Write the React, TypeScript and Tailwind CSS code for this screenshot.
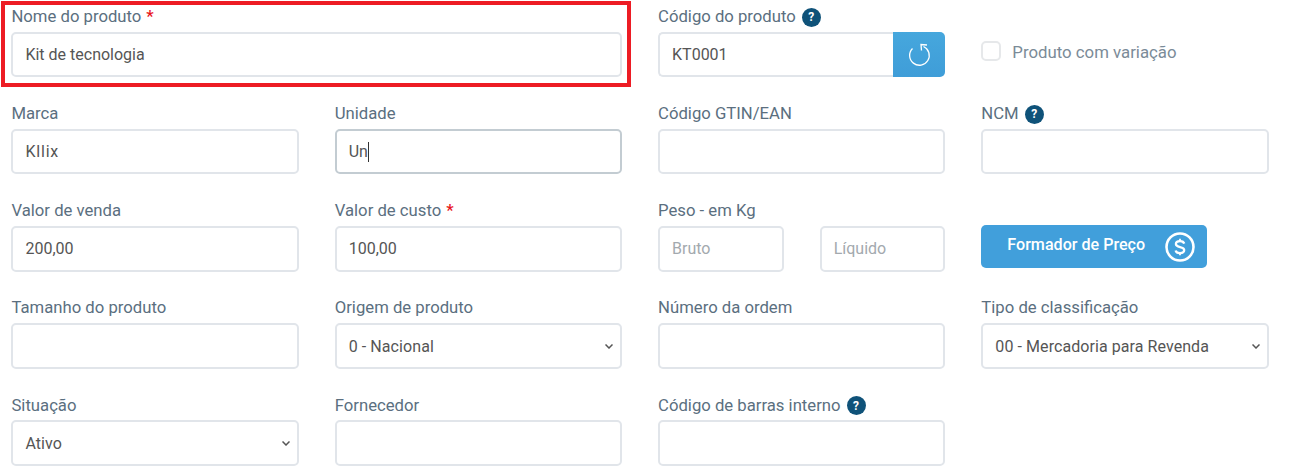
import { useId } from 'react';

const inputClass =
  'block h-[45.4px] w-full rounded-[5px] border-2 bg-white px-[12px] text-[16px] text-[#555] outline-none placeholder:text-[#a3a9ae]';
const idleBorder = 'border-[#e1e5ea]';

const HelpDot = () => (
  <span className="flex h-[19px] w-[19px] items-center justify-center rounded-full bg-[#0f5279] text-[12px] font-bold leading-none text-white">
    ?
  </span>
);

const Label = ({ text, required, help }: { text: string; required?: boolean; help?: boolean }) => (
  <div className="mb-[3.75px] mt-[1.25px] flex h-[22px] items-center gap-[6px] text-[16.7px] leading-[22px] text-[#5b6f7f]">
    <span>{text}</span>
    {required && <span className="-ml-[1px] font-medium text-[#e8141c]">*</span>}
    {help && <HelpDot />}
  </div>
);

const TextField = ({
  label,
  value,
  required,
  help,
  inputExtra = '',
}: {
  label: string;
  value?: string;
  required?: boolean;
  help?: boolean;
  inputExtra?: string;
}) => {
  const id = useId();
  return (
    <div>
      <label htmlFor={id}>
        <Label text={label} required={required} help={help} />
      </label>
      <input id={id} className={`${inputClass} ${idleBorder} ${inputExtra}`} defaultValue={value} />
    </div>
  );
};

const SelectField = ({ label, value }: { label: string; value: string }) => (
  <div>
    <Label text={label} />
    <div className="relative">
      <select className={`${inputClass} ${idleBorder} appearance-none pt-[2px] tracking-[0.07px]`} defaultValue={value}>
        <option>{value}</option>
      </select>
      <svg
        className="pointer-events-none absolute right-[9px] top-[21px]"
        width="8"
        height="5"
        viewBox="0 0 8 5"
        fill="none"
        stroke="#555"
        strokeWidth="1.5"
      >
        <path d="M0.5 0.5 4 4l3.5-3.5" />
      </svg>
    </div>
  </div>
);

export default function App() {
  return (
    <div className="relative h-[471px] overflow-hidden bg-white font-['Roboto',sans-serif]">
      <div className="grid grid-cols-4 gap-x-9 gap-y-[24.7px] pl-[11.45px] pr-[24.35px] pt-[5px]">
        <div className="col-span-2">
          <TextField label="Nome do produto" value="Kit de tecnologia" required />
        </div>
        <div>
          <Label text="Código do produto" help />
          <div className="flex">
            <input className={`${inputClass} ${idleBorder} rounded-r-none border-r-0`} defaultValue="KT0001" />
            <button className="flex h-[45.4px] w-[52px] shrink-0 items-center justify-center rounded-r-[5px] bg-gradient-to-b from-[#46a7dd] to-[#3f9dd8]">
              <svg width="24" height="24" viewBox="0 0 24 24" fill="none" stroke="#fff" strokeWidth="1.3">
                <path d="M5.5 5.5A9.8 9.8 0 1 0 16.5 3.5" />
                <path d="M20 2 14 1.5l.5 6" />
              </svg>
            </button>
          </div>
        </div>
        <div className="flex items-center gap-[11px] pt-[23px]">
          <span className="-mt-[3px] h-5 w-5 rounded-[5px] border-2 border-[#e6e8ea] bg-white" />
          <span className="text-[16.8px] text-[#7b8b98]">Produto com variação</span>
        </div>

        <TextField label="Marca" value="Kllix" inputExtra="tracking-[0.8px]" />
        <div>
          <Label text="Unidade" />
          <div className="relative">
            <input className={`${inputClass} border-[#c3ccd2]`} defaultValue="Un" />
            <span className="absolute left-[33px] top-[13px] h-[20px] w-px bg-[#333]" />
          </div>
        </div>
        <TextField label="Código GTIN/EAN" />
        <TextField label="NCM" help />

        <TextField label="Valor de venda" value="200,00" />
        <TextField label="Valor de custo" value="100,00" required />
        <div>
          <Label text="Peso - em Kg" />
          <div className="flex gap-9">
            <input className={`${inputClass} ${idleBorder} min-w-0`} placeholder="Bruto" />
            <input className={`${inputClass} ${idleBorder} min-w-0`} placeholder="Líquido" />
          </div>
        </div>
        <div className="pt-[26px]">
          <button className="flex h-[43px] w-[226px] items-center justify-between rounded-[5px] bg-[#419fdb] pl-[26px] pr-[12px] text-[16.1px] font-medium text-white">
            <span className="-mt-[3px]">Formador de Preço</span>
            <svg width="30" height="30" viewBox="0 0 30 30" fill="none" stroke="#fff">
              <circle cx="15" cy="15" r="13.5" strokeWidth="2.6" />
              <path
                d="M19.2 11.6c-.4-1.6-2-2.5-4.2-2.5-2.4 0-4.1 1.2-4.1 3s1.5 2.5 4.1 3c2.6.5 4.2 1.2 4.2 3s-1.8 3-4.2 3-4-1-4.4-2.7"
                strokeWidth="2.3"
              />
              <path d="M15 6.8v2.4M15 20.8v2.4" strokeWidth="1.8" />
            </svg>
          </button>
        </div>

        <TextField label="Tamanho do produto" />
        <SelectField label="Origem de produto" value="0 - Nacional" />
        <TextField label="Número da ordem" />
        <SelectField label="Tipo de classificação" value="00 - Mercadoria para Revenda" />

        <SelectField label="Situação" value="Ativo" />
        <TextField label="Fornecedor" />
        <TextField label="Código de barras interno" help />
      </div>
      <div className="pointer-events-none absolute left-px top-px h-[86px] w-[630px] border-4 border-[#ed1c24]" />
    </div>
  );
}
